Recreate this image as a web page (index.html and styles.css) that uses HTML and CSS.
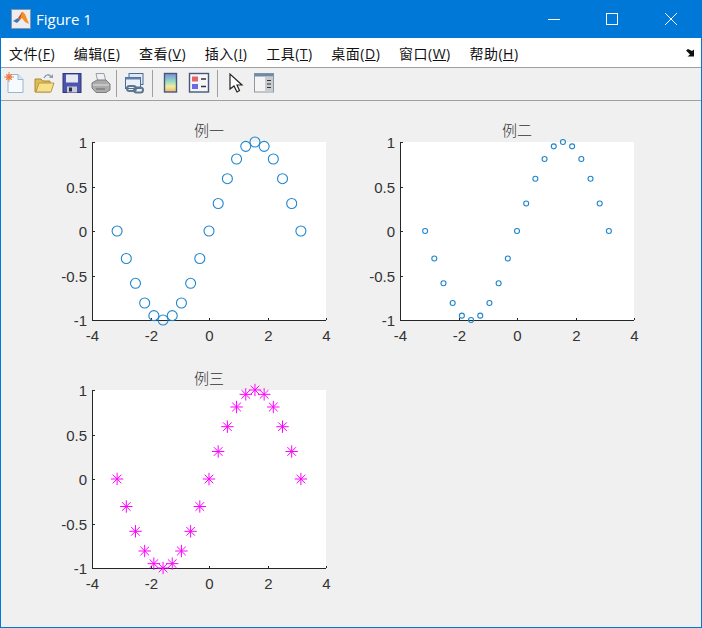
FILE: index.html
```html
<!DOCTYPE html>
<html lang="zh">

<head>
    <meta charset="UTF-8">
    <title>Figure 1</title>
    <link rel="stylesheet" href="styles.css">
</head>

<body>
    <div class="window">
        <div class="titlebar">
            <svg class="app-icon" width="20" height="20" viewBox="0 0 20 20">
                <rect x="0.5" y="0.5" width="19" height="19" fill="#ececf2" stroke="#8a93a8"/>
                <path d="M2 12 L7 9 L9 11 L6 14 Z" fill="#3f78b4"/>
                <path d="M7 9 L11 3 L13 4 L9 11 Z" fill="#d94f1e"/>
                <path d="M11 3 L14 5 L18 15 L14 13 L11 9 L9 11 Z" fill="#f29020"/>
            </svg>
            <span class="title">Figure 1</span>
            <div class="controls">
                <button class="control"><svg width="14" height="14" viewBox="0 0 14 14"><path d="M1 7.5H13" stroke="#fff"/></svg></button>
                <button class="control"><svg width="14" height="14" viewBox="0 0 14 14"><rect x="1.5" y="1.5" width="11" height="11" fill="none" stroke="#fff"/></svg></button>
                <button class="control"><svg width="14" height="14" viewBox="0 0 14 14"><path d="M1 1L13 13M13 1L1 13" stroke="#fff"/></svg></button>
            </div>
        </div>

        <div class="menubar">
            <span class="menu">文件(<u>F</u>)</span>
            <span class="menu">编辑(<u>E</u>)</span>
            <span class="menu">查看(<u>V</u>)</span>
            <span class="menu">插入(<u>I</u>)</span>
            <span class="menu">工具(<u>T</u>)</span>
            <span class="menu">桌面(<u>D</u>)</span>
            <span class="menu">窗口(<u>W</u>)</span>
            <span class="menu">帮助(<u>H</u>)</span>
            <svg class="dock" width="10" height="8" viewBox="0 0 10 8">
                <path d="M0 1.500L2 0L6 2L8 0.500V7.500H1.500L4 5.500Z" fill="#111"/>
            </svg>
        </div>

        <div class="toolbar">
            <!-- new -->
            <svg class="tool" width="22" height="22" viewBox="0 0 22 22">
                <path d="M4 2.500H14L19 7.500V20.500H4Z" fill="#f6fbff" stroke="#9db4d0"/>
                <path d="M14 2.500V7.500H19" fill="#d8e6f5" stroke="#9db4d0"/>
                <circle cx="5" cy="5" r="3" fill="#f2a36b"/>
                <path d="M5 0V10M0 5H10M2 2L8 8M8 2L2 8" stroke="#e8743a" stroke-width="0.8"/>
            </svg>
            <!-- open -->
            <svg class="tool" width="22" height="22" viewBox="0 0 22 22">
                <path d="M2 7H8L10 9H17V20H2Z" fill="#e0bb50" stroke="#a98a35"/>
                <path d="M3 20L6 11H21L18 20Z" fill="#f7e08c" stroke="#b79a45"/>
                <path d="M11 6C13 2 16 2 18 5" fill="none" stroke="#8b9fb5" stroke-width="1.500"/>
                <path d="M16 6H20V2Z" fill="#8b9fb5"/>
            </svg>
            <!-- save -->
            <svg class="tool" width="22" height="22" viewBox="0 0 22 22">
                <rect x="2" y="1.500" width="18" height="19" fill="#4b55ad" stroke="#2f3679"/>
                <rect x="5" y="2.500" width="12" height="8" fill="#e6e8f4"/>
                <rect x="6" y="14.500" width="10" height="6" fill="#c9cbd8"/>
                <rect x="8" y="15.500" width="3" height="4" fill="#2b2b4a"/>
            </svg>
            <!-- print -->
            <svg class="tool" width="22" height="22" viewBox="0 0 22 22">
                <path d="M6 1.500H14L16 10H8Z" fill="#eef0f3" stroke="#9a9fa6"/>
                <path d="M2 11L7 8H16L20 12V18L16 20.500H6L2 16Z" fill="#a9aaa9" stroke="#7c7d7c"/>
                <path d="M3 13H19" stroke="#e2e2e2"/>
                <path d="M6 17H15" stroke="#666"/>
            </svg>
            <span class="sep sep-first"></span>
            <!-- link -->
            <svg class="tool" width="22" height="22" viewBox="0 0 22 22">
                <rect x="5" y="1.500" width="14" height="11" fill="#dfe8f4" stroke="#4a6d97"/>
                <rect x="1.500" y="5.500" width="15" height="11" fill="#eaf0f8" stroke="#4a6d97"/>
                <rect x="1.500" y="5.500" width="15" height="2" fill="#5f82ab"/>
                <rect x="3" y="14" width="9" height="5" rx="2.500" fill="none" stroke="#5d7692" stroke-width="2"/>
                <rect x="10" y="15.500" width="9" height="5" rx="2.500" fill="none" stroke="#5d7692" stroke-width="2"/>
            </svg>
            <span class="sep"></span>
            <!-- colorbar -->
            <svg class="tool" width="22" height="22" viewBox="0 0 22 22">
                <defs>
                    <linearGradient id="cbar" x1="0" y1="0" x2="0" y2="1">
                        <stop offset="0" stop-color="#7d8fd8"/>
                        <stop offset="0.4" stop-color="#8fd6c8"/>
                        <stop offset="0.7" stop-color="#f0ec9c"/>
                        <stop offset="1" stop-color="#f4b26c"/>
                    </linearGradient>
                </defs>
                <rect x="4.500" y="1.500" width="12" height="18.500" fill="url(#cbar)" stroke="#47587c" stroke-width="1.400"/>
            </svg>
            <!-- legend -->
            <svg class="tool" width="22" height="22" viewBox="0 0 22 22">
                <rect x="1.500" y="1.500" width="19" height="18.500" fill="#f5f6fa" stroke="#47587c" stroke-width="1.400"/>
                <rect x="4" y="4.500" width="6" height="5" fill="#e86464"/>
                <rect x="4" y="12" width="6" height="5" fill="#6a6ae6"/>
                <path d="M13 7H18M13 14.500H18" stroke="#333" stroke-width="1.400"/>
            </svg>
            <span class="sep"></span>
            <!-- pointer -->
            <svg class="tool" width="22" height="22" viewBox="0 0 22 22">
                <path d="M6 2V17L10 14L13 20L15.500 18.500L13 13H18Z" fill="#fff" stroke="#222" stroke-width="1.200"/>
            </svg>
            <!-- panel -->
            <svg class="tool" width="22" height="22" viewBox="0 0 22 22">
                <rect x="1.500" y="1.500" width="19" height="18.500" fill="#f4f4f4" stroke="#8e979f"/>
                <rect x="1.500" y="1.500" width="19" height="3" fill="#6e8ba3"/>
                <rect x="12" y="5" width="8" height="14.500" fill="#c9ccce"/>
                <path d="M14 8.500H18M14 12H18M14 15.500H18" stroke="#333" stroke-width="1.200"/>
            </svg>
        </div>

        <div class="figure">
            <svg class="axes" data-title="例一" data-marker="circle" data-size="5" width="308" height="248"></svg>
            <svg class="axes" data-title="例二" data-marker="circle" data-size="2.500" width="308" height="248"></svg>
            <svg class="axes" data-title="例三" data-marker="star" data-size="6.200" width="308" height="248"></svg>
        </div>
    </div>

    <script src="plot.js"></script>
</body>

</html>
```

FILE: styles.css
```css
* {
    box-sizing: border-box;
}

body {
    margin: 0;
    padding: 0;
    background-color: #f0f0f0;
}

.window {
    width: 702px;
    height: 628px;
    display: flex;
    flex-direction: column;
    border: 1px solid #0078d7;
    border-top: none;
    overflow: hidden;
}

.titlebar {
    height: 38px;
    background-color: #0078d7;
    display: flex;
    align-items: center;
    padding: 0 1px 0 10px;
    color: #fff;
}

.app-icon {
    flex: none;
}

.title {
    margin-left: 5px;
    font-family: "Open Sans", sans-serif;
    font-size: 15px;
}

.controls {
    margin-left: auto;
    display: flex;
}

.control {
    width: 58.5px;
    height: 38px;
    padding: 0;
    border: none;
    background: none;
    display: flex;
    align-items: center;
    justify-content: center;
}

.menubar {
    height: 30px;
    background-color: #fff;
    border-bottom: 1px solid #a0a0a0;
    display: flex;
    align-items: center;
    padding-left: 8px;
    gap: 18.7px;
    font-family: "Open Sans", "Noto Sans CJK SC", sans-serif;
    font-size: 14px;
    letter-spacing: 0.5px;
    color: #111;
}

.menu {
    white-space: nowrap;
}

.dock {
    margin-left: auto;
    margin-right: 5px;
}

.toolbar {
    height: 33px;
    background-color: #f0f0f0;
    border-bottom: 1px solid #a0a0a0;
    display: flex;
    align-items: center;
    padding: 0 0 2px 3px;
    gap: 6.5px;
}

.tool {
    flex: none;
}

.sep {
    width: 1px;
    height: 27px;
    background-color: #a0a0a0;
}

.sep-first {
    margin-left: -2px;
}

.figure {
    flex: 1;
    display: grid;
    grid-template-columns: 308px 308px;
    grid-auto-rows: 248px;
    padding: 11px 0 0 32px;
}

.axes {
    display: block;
}

.tick-label {
    font-family: "Liberation Sans", sans-serif;
    font-size: 15px;
    fill: #333;
}

.axes-title {
    font-family: "Noto Sans CJK SC", sans-serif;
    font-size: 15px;
    font-weight: 300;
    fill: #333;
}
```

FILE: plot.js
```js
// sin(x) for x = -pi:pi/10:pi, same three axes as the m-file
const LEFT = 59, TOP = 30, W = 234, H = 178;

const px = (x) => LEFT + (x + 4) / 8 * W;
const py = (y) => TOP + (1 - y) / 2 * H;

function marker(type, cx, cy, r) {
    if (type === 'circle') {
        return `<circle cx="${cx}" cy="${cy}" r="${r}" fill="none" stroke="#1f86cc" stroke-width="1.1"/>`;
    }
    const d = r * 0.7;
    return `<path d="M${cx - r} ${cy}H${cx + r}M${cx} ${cy - r}V${cy + r}` +
        `M${cx - d} ${cy - d}L${cx + d} ${cy + d}M${cx - d} ${cy + d}L${cx + d} ${cy - d}" ` +
        `fill="none" stroke="#ff00ff" stroke-width="1"/>`;
}

document.querySelectorAll('.axes').forEach((svg) => {
    let out = `<rect x="${LEFT}" y="${TOP}" width="${W}" height="${H}" fill="#fff"/>`;
    const right = LEFT + W, bottom = TOP + H;

    out += `<path d="M${LEFT + 0.5} ${TOP}V${bottom + 0.5}H${right}" fill="none" stroke="#262626"/>`;

    [-4, -2, 0, 2, 4].forEach((t) => {
        const x = Math.round(px(t)) + 0.5;
        out += `<path d="M${x} ${bottom}v-2" stroke="#262626"/>`;
        out += `<text class="tick-label" x="${x}" y="${bottom + 21}" text-anchor="middle">${t}</text>`;
    });

    [-1, -0.5, 0, 0.5, 1].forEach((t) => {
        const y = Math.round(py(t)) + 0.5;
        out += `<path d="M${LEFT} ${y}h3" stroke="#262626"/>`;
        out += `<text class="tick-label" x="${LEFT - 5}" y="${y + 5}" text-anchor="end">${t}</text>`;
    });

    out += `<text class="axes-title" x="${LEFT + W / 2}" y="${TOP - 6}" text-anchor="middle">${svg.dataset.title}</text>`;

    for (let i = -10; i <= 10; i++) {
        const x = i * Math.PI / 10;
        out += marker(svg.dataset.marker, px(x), py(Math.sin(x)), +svg.dataset.size);
    }

    svg.innerHTML = out;
});
```
